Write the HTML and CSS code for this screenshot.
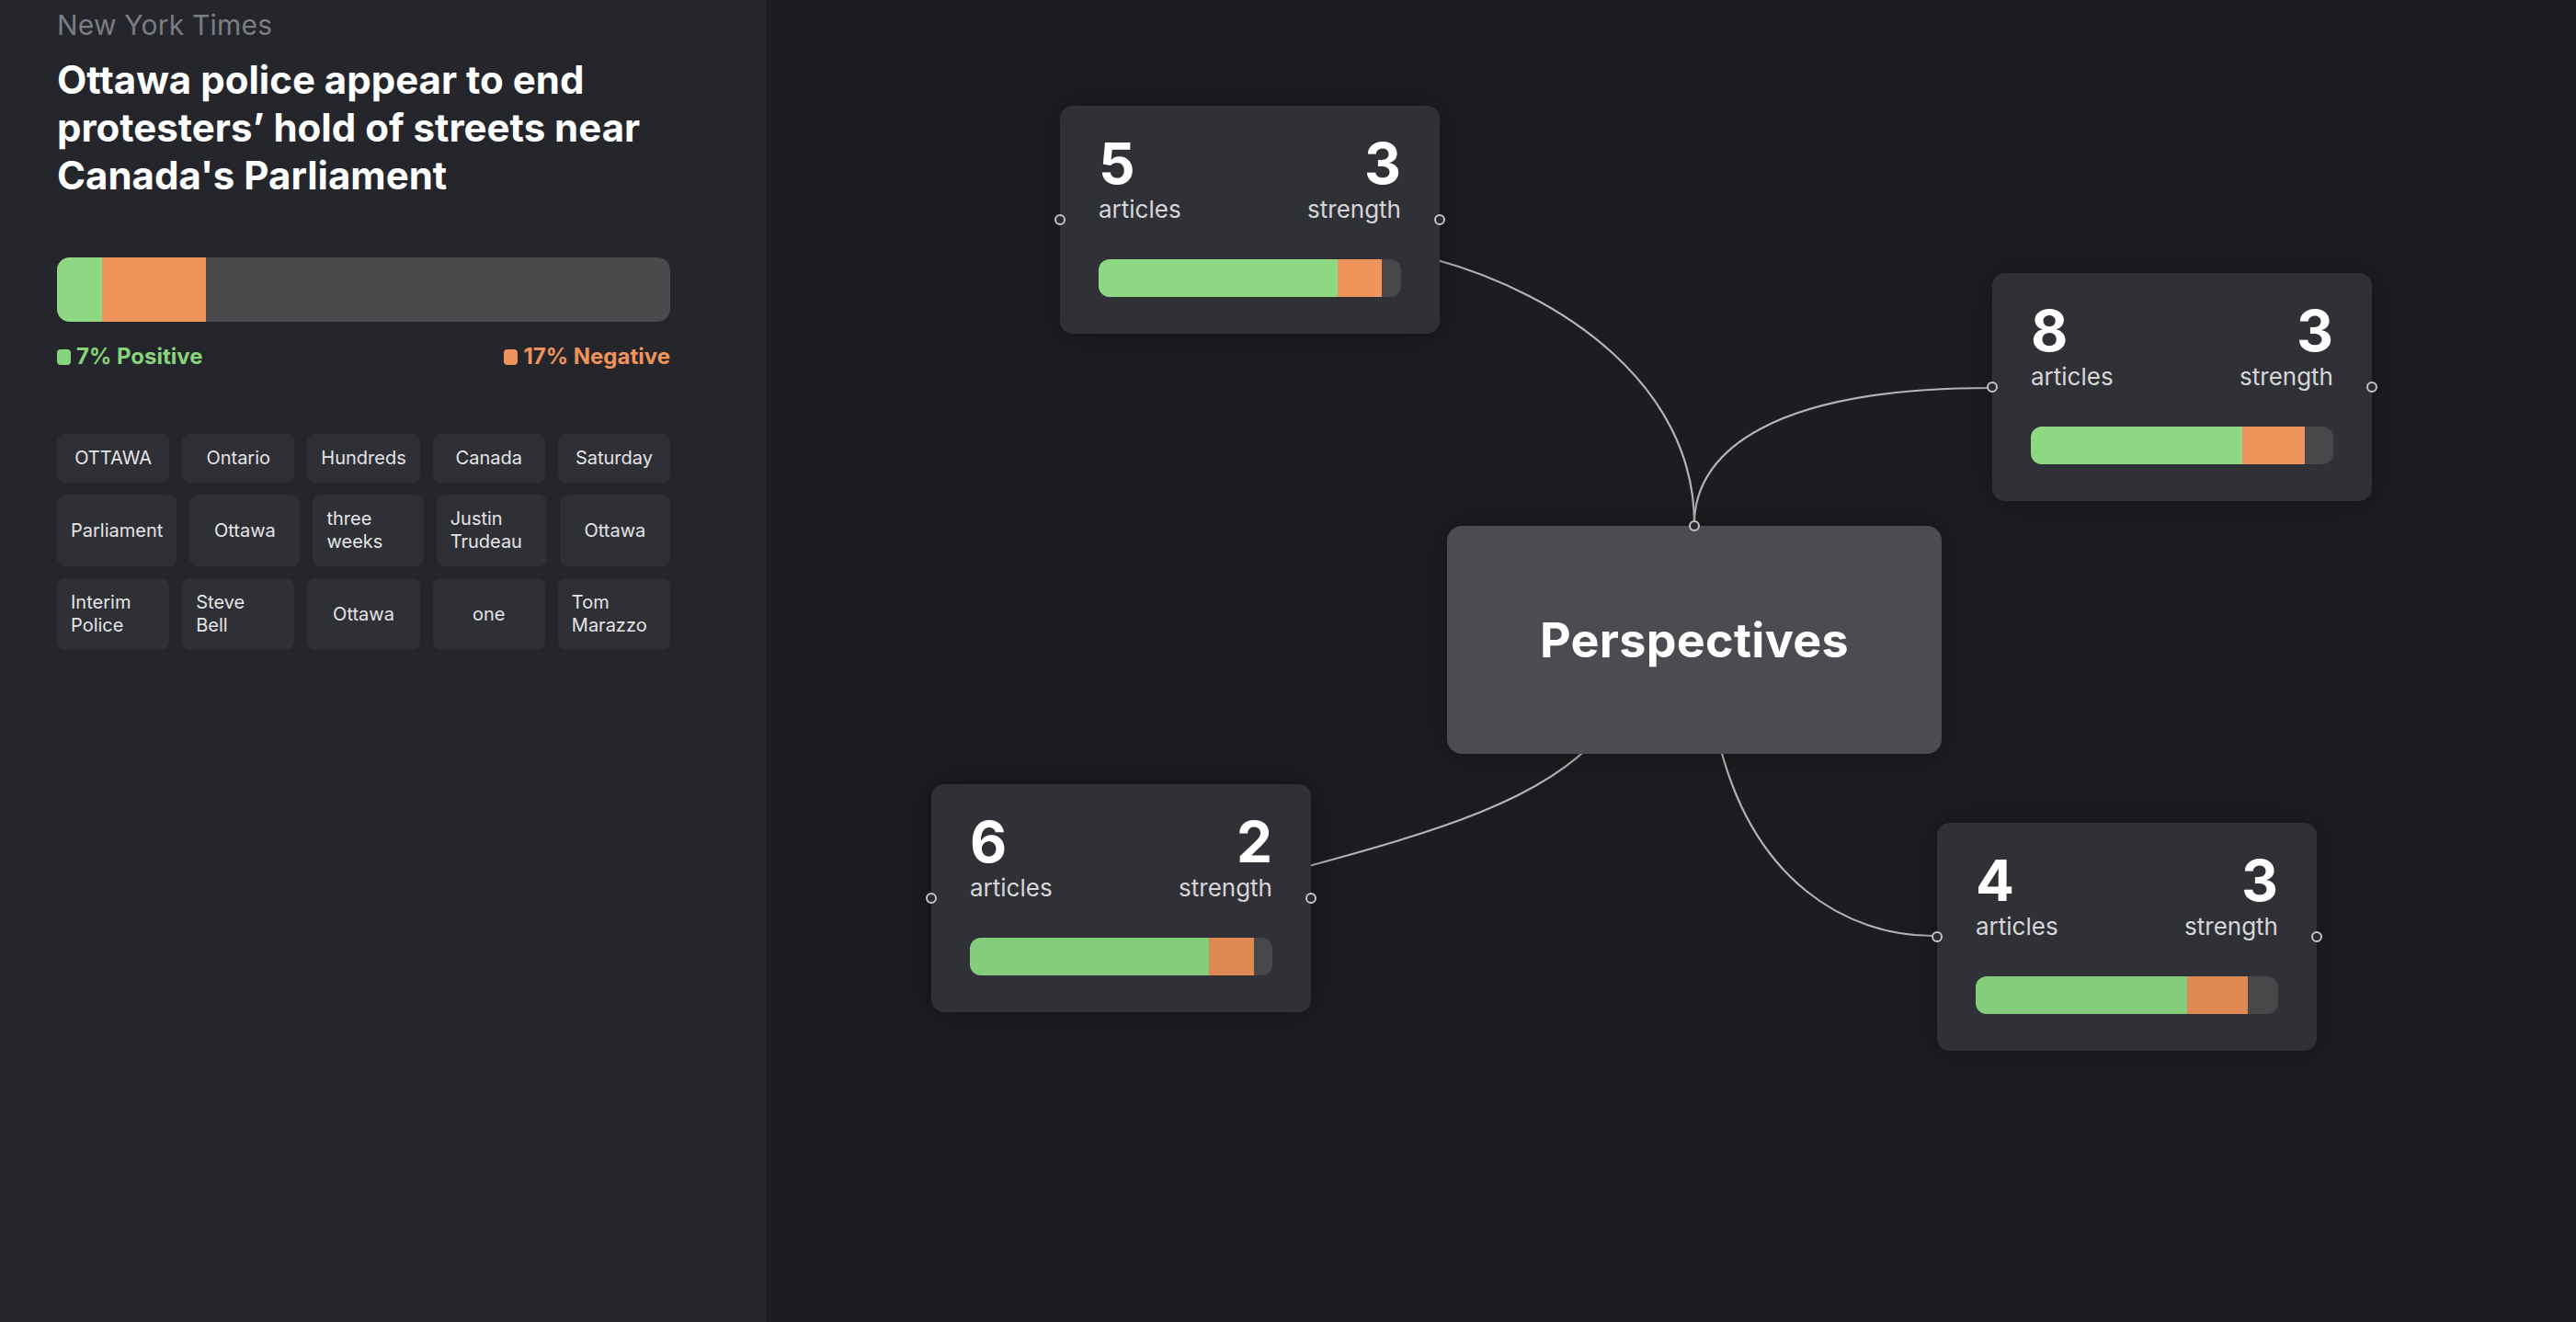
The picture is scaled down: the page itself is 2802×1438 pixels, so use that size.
FILE: index.html
```html
<!DOCTYPE html>
<html lang="en">
  <head>
    <meta charset="UTF-8" />
    <meta name="viewport" content="width=device-width, initial-scale=1.0" />
    <title>Perspectives</title>
    <link rel="stylesheet" href="styles.css">
  </head>
  <body>
    <div class="page">
      <!-- article panel -->
      <aside class="side">
        <div class="source">New York Times</div>
        <h1 class="headline">Ottawa police appear to end protesters’ hold of streets near Canada's Parliament</h1>

        <div class="sentiment">
          <div class="pos" style="width: 7.3%"></div>
          <div class="neg" style="width: 17%"></div>
        </div>
        <div class="legend">
          <span class="legend-item legend-pos"><i></i>7% Positive</span>
          <span class="legend-item legend-neg"><i></i>17% Negative</span>
        </div>

        <div class="tags">
          <div class="tag-row">
            <div class="tag"><span>OTTAWA</span></div>
            <div class="tag"><span>Ontario</span></div>
            <div class="tag"><span>Hundreds</span></div>
            <div class="tag"><span>Canada</span></div>
            <div class="tag"><span>Saturday</span></div>
          </div>
          <div class="tag-row">
            <div class="tag"><span>Parliament</span></div>
            <div class="tag"><span>Ottawa</span></div>
            <div class="tag"><span>three weeks</span></div>
            <div class="tag"><span>Justin Trudeau</span></div>
            <div class="tag"><span>Ottawa</span></div>
          </div>
          <div class="tag-row">
            <div class="tag"><span>Interim Police</span></div>
            <div class="tag"><span>Steve Bell</span></div>
            <div class="tag"><span>Ottawa</span></div>
            <div class="tag"><span>one</span></div>
            <div class="tag"><span>Tom Marazzo</span></div>
          </div>
        </div>
      </aside>

      <!-- graph canvas -->
      <main class="canvas">
        <svg class="edges" viewBox="833 0 1969 1438" width="1969" height="1438">
          <path d="M1560,282 C1700,320 1843,420 1843,570" />
          <path d="M1843,570 C1843,490 1930,422 2165,422" />
          <path d="M1740,800 C1680,870 1560,905 1420,943" />
          <path d="M1868,800 C1905,960 2010,1018 2103,1018" />
        </svg>

        <div class="node" style="left: 320px; top: 115px">
          <span class="handle handle-left"></span>
          <div class="stats">
            <div class="stat"><b>5</b><span>articles</span></div>
            <div class="stat stat-right"><b>3</b><span>strength</span></div>
          </div>
          <div class="meter">
            <div class="pos" style="width: 79%"></div>
            <div class="neg" style="width: 14.5%"></div>
          </div>
          <span class="handle handle-right"></span>
        </div>

        <div class="node" style="left: 1334px; top: 297px">
          <span class="handle handle-left"></span>
          <div class="stats">
            <div class="stat"><b>8</b><span>articles</span></div>
            <div class="stat stat-right"><b>3</b><span>strength</span></div>
          </div>
          <div class="meter">
            <div class="pos" style="width: 70%"></div>
            <div class="neg" style="width: 20.5%"></div>
          </div>
          <span class="handle handle-right"></span>
        </div>

        <div class="node center-node" style="left: 741px; top: 572px">
          <span class="handle handle-top"></span>
          Perspectives
        </div>

        <div class="node" style="left: 180px; top: 853px">
          <span class="handle handle-left"></span>
          <div class="stats">
            <div class="stat"><b>6</b><span>articles</span></div>
            <div class="stat stat-right"><b>2</b><span>strength</span></div>
          </div>
          <div class="meter dim">
            <div class="pos" style="width: 79%"></div>
            <div class="neg" style="width: 15%"></div>
          </div>
          <span class="handle handle-right"></span>
        </div>

        <div class="node" style="left: 1274px; top: 895px">
          <span class="handle handle-left"></span>
          <div class="stats">
            <div class="stat"><b>4</b><span>articles</span></div>
            <div class="stat stat-right"><b>3</b><span>strength</span></div>
          </div>
          <div class="meter dim">
            <div class="pos" style="width: 70%"></div>
            <div class="neg" style="width: 20%"></div>
          </div>
          <span class="handle handle-right"></span>
        </div>
      </main>
    </div>
  </body>
</html>
```

FILE: styles.css
```css
* {
  padding: 0;
  margin: 0;
  box-sizing: border-box;
}

body {
  font-family: Inter, "Noto Sans", sans-serif;
  background-color: #1c1d20;
  color: #fff;
  overflow: hidden;
}

.page {
  display: flex;
  height: 100vh;
}

/* 左侧文章面板 */
.side {
  width: 833px;
  flex-shrink: 0;
  background: #25262b;
  padding: 10px 104px 0 62px;
}

.source {
  font-size: 30px;
  line-height: 35px;
  letter-spacing: 0.2px;
  color: #7c7d82;
}

.headline {
  margin-top: 16px;
  font-size: 42px;
  line-height: 52px;
  font-weight: 700;
}

.sentiment {
  display: flex;
  height: 70px;
  margin-top: 63px;
  border-radius: 14px;
  overflow: hidden;
  background: #4a4a4c;
}

.pos {
  background: #8ed884;
}

.neg {
  background: #ee955c;
}

.legend {
  display: flex;
  justify-content: space-between;
  margin-top: 23px;
  font-size: 24px;
  line-height: 30px;
  font-weight: 700;
}

.legend-item {
  display: flex;
  align-items: center;
  gap: 6px;
}

.legend-item i {
  width: 15px;
  height: 17px;
  border-radius: 4px;
  background: currentColor;
}

.legend-pos {
  color: #86d47b;
}

.legend-neg {
  color: #ef935b;
}

.tags {
  display: flex;
  flex-direction: column;
  gap: 13px;
  margin-top: 69px;
}

.tag-row {
  display: flex;
  gap: 14px;
}

.tag {
  flex: 1 1 0;
  display: flex;
  align-items: center;
  justify-content: center;
  padding: 14px 15px;
  border-radius: 9px;
  background: #2f3035;
  font-size: 20px;
  line-height: 25px;
  color: #e4e4e6;
}

/* 右侧节点画布 */
.canvas {
  position: relative;
  flex: 1;
  background: #1c1d20;
}

.edges {
  position: absolute;
  left: 0;
  top: 0;
}

.edges path {
  fill: none;
  stroke: #b4b4b6;
  stroke-width: 2.2;
}

.node {
  position: absolute;
  width: 413px;
  padding: 32px 42px 40px 42px;
  border-radius: 14px;
  background: #303136;
  box-shadow: 0 0 40px rgba(0, 0, 0, 0.35);
}

.stats {
  display: flex;
  justify-content: space-between;
}

.stat {
  display: flex;
  flex-direction: column;
}

.stat b {
  font-size: 62px;
  line-height: 62px;
  font-weight: 700;
}

.stat span {
  margin-top: 3px;
  font-size: 26px;
  line-height: 31px;
  color: #d6d6d8;
}

.stat-right {
  align-items: flex-end;
}

.meter {
  display: flex;
  height: 41px;
  margin-top: 39px;
  border-radius: 12px;
  overflow: hidden;
  background: #48484a;
}

.meter.dim .pos {
  background: #84cd7c;
}

.meter.dim .neg {
  background: #de8854;
}

.center-node {
  width: 538px;
  height: 248px;
  padding: 0;
  display: flex;
  align-items: center;
  justify-content: center;
  border-radius: 16px;
  background: #4b4c51;
  font-size: 52px;
  font-weight: 700;
  letter-spacing: 0.3px;
}

/* 连接点 */
.handle {
  position: absolute;
  width: 12px;
  height: 12px;
  border-radius: 50%;
  border: 2px solid #c4c4c6;
  background: #2a2b2f;
}

.handle-left {
  left: -6px;
  top: calc(50% - 6px);
}

.handle-right {
  right: -6px;
  top: calc(50% - 6px);
}

.handle-top {
  top: -6px;
  left: calc(50% - 6px);
}
```
